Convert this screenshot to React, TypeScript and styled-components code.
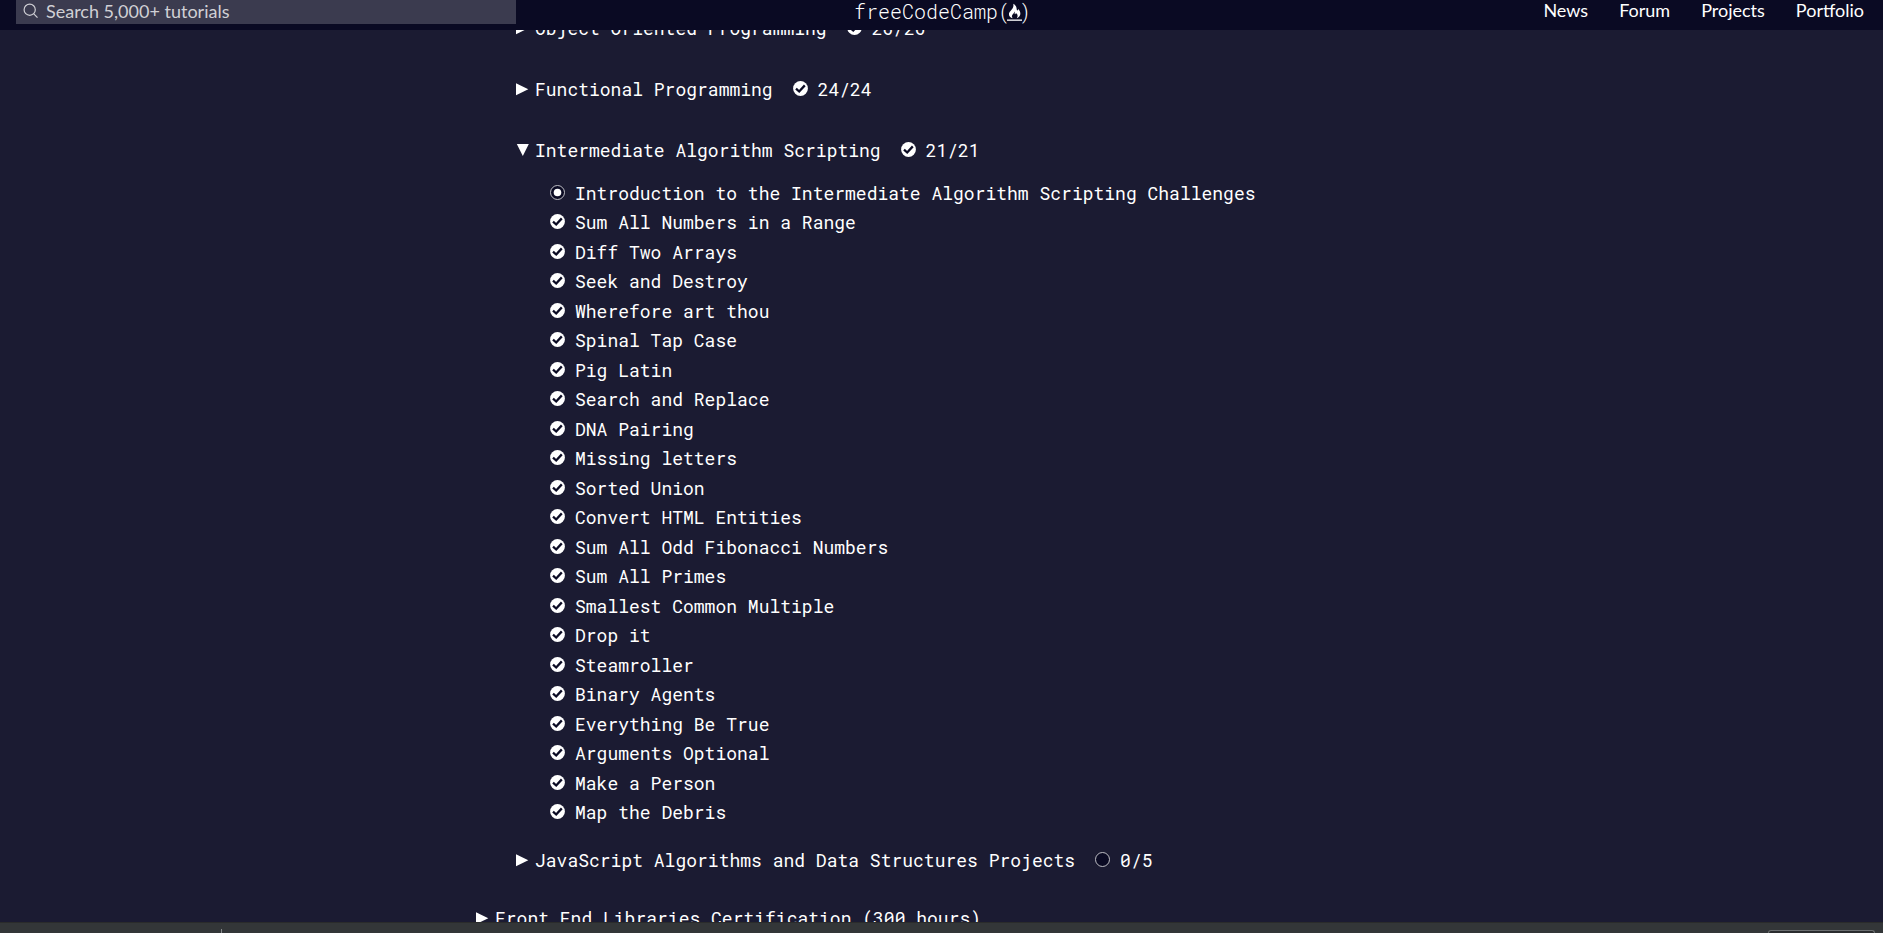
import React from 'react';
import styled, { createGlobalStyle } from 'styled-components';

const GlobalStyle = createGlobalStyle`
  *, *::before, *::after { box-sizing: border-box; }
  body {
    margin: 0;
    background: #1b1b32;
    color: #fff;
    font-family: Lato, sans-serif;
    font-size: 18px;
  }
`;

const mono = `'Roboto Mono', 'DejaVu Sans Mono', monospace`;

const Page = styled.div`
  display: flex;
  flex-direction: column;
  height: 100vh;
  overflow: hidden;
`;

const Header = styled.header`
  display: grid;
  grid-template-columns: 1fr auto 1fr;
  align-items: start;
  flex: none;
  height: 30px;
  padding: 0 16px;
  background: #0a0a23;
`;

const SearchForm = styled.form`
  display: flex;
  align-items: center;
  width: 500px;
  max-width: 100%;
  height: 24px;
  padding: 0 0 2px 7px;
  gap: 7px;
  background: #3b3b4f;
  color: #d0d0d5;
`;

const SearchInput = styled.input`
  flex: 1;
  min-width: 0;
  height: 22px;
  padding: 0;
  border: 0;
  outline: 0;
  background: transparent;
  color: inherit;
  font: inherit;
  line-height: 22px;
  &::placeholder { color: inherit; opacity: 1; }
`;

const Logo = styled.a`
  display: flex;
  align-items: center;
  height: 22px;
  padding-left: 2px;
  color: #fff;
  font-family: ${mono};
  font-size: 20px;
  font-weight: 300;
  line-height: 20px;
  text-decoration: none;
`;

const Flame = styled.svg`
  flex: none;
  margin: 1px -3px 0;
`;

const Nav = styled.nav`
  display: flex;
  justify-content: flex-end;
  gap: 31px;
  padding-right: 3px;
`;

const NavLink = styled.a`
  color: #fff;
  line-height: 20px;
  text-decoration: none;
`;

const Main = styled.main`
  flex: 1;
  min-height: 0;
  overflow: hidden;
  font-family: ${mono};
`;

const Curriculum = styled.div`
  display: flex;
  flex-direction: column;
  width: 931px;
  max-width: 100%;
  margin: -16px auto 0;
`;

const Blocks = styled.div`
  display: flex;
  flex-direction: column;
  padding-left: 40px;
`;

const BlockSection = styled.section<{ $open?: boolean }>`
  margin-bottom: ${({ $open }) => ($open ? 18 : 32)}px;
  &:last-child { margin-bottom: 29px; }
`;

const Toggle = styled.button`
  display: flex;
  align-items: center;
  height: 29px;
  padding: 0;
  border: 0;
  background: transparent;
  color: inherit;
  font: inherit;
  line-height: 29px;
  white-space: nowrap;
`;

const Arrow = styled.svg`
  flex: none;
  margin-right: 6px;
`;

const Progress = styled.span`
  display: flex;
  align-items: center;
  gap: 10px;
  margin-left: 20px;
`;

const StatusMark = styled.svg`
  flex: none;
  margin-bottom: 2px;
`;

const Lessons = styled.ul`
  margin: 14px 0 0;
  padding: 0 0 0 34px;
  list-style: none;
`;

const Lesson = styled.li`
  height: 29px;
  &:nth-child(even) { height: 30px; }
`;

const LessonLink = styled.a`
  display: flex;
  align-items: center;
  gap: 10px;
  color: inherit;
  line-height: 29px;
  text-decoration: none;
  white-space: nowrap;
`;

const Taskbar = styled.footer`
  display: flex;
  justify-content: space-between;
  align-items: flex-end;
  flex: none;
  height: 11px;
  padding: 0 8px 0 221px;
  border-top: 1px solid #2a2b2b;
  background: #333638;
`;

const Divider = styled.span`
  width: 1px;
  height: 4px;
  background: #85888a;
`;

const Tray = styled.span`
  width: 107px;
  height: 3px;
  border: 1px solid #6b6e70;
  border-bottom: 0;
  border-radius: 3px 3px 0 0;
  background: #2a2c2e;
`;

type Status = 'done' | 'intro' | 'empty';

const StatusIcon = ({ status }: { status: Status }) => (
  <StatusMark width="15" height="15" viewBox="0 0 15 15" aria-hidden="true">
    {status === 'done' ? (
      <>
        <circle cx="7.5" cy="7.5" r="7.4" fill="#fff" />
        <path d="M3 7.6 6.2 10.5 11.8 4.4" fill="none" stroke="#0a0a23" strokeWidth="2.3" />
      </>
    ) : (
      <>
        <circle cx="7.5" cy="7.5" r="7" fill="#0a0a23" stroke="#d0d0d5" strokeWidth="0.9" />
        {status === 'intro' && <circle cx="7.5" cy="7.5" r="3.8" fill="#fff" />}
      </>
    )}
  </StatusMark>
);

const ToggleArrow = ({ open }: { open?: boolean }) => (
  <Arrow width="13" height="13" viewBox="0 0 13 13" fill="#fff" aria-hidden="true">
    <path d={open ? 'M.8 0H12.8L6.8 12z' : 'M0 .2 12.3 6.2 0 12.200z'} />
  </Arrow>
);

interface BlockProps {
  title: string;
  progress?: string;
  status?: Status;
  open?: boolean;
  children?: React.ReactNode;
}

const Block = ({ title, progress, status = 'done', open, children }: BlockProps) => (
  <BlockSection $open={open}>
    <Toggle type="button" aria-expanded={!!open}>
      <ToggleArrow open={open} />
      {title}
      {progress && (
        <Progress>
          <StatusIcon status={status} />
          {progress}
        </Progress>
      )}
    </Toggle>
    {children}
  </BlockSection>
);

const lessons = [
  'Introduction to the Intermediate Algorithm Scripting Challenges',
  'Sum All Numbers in a Range',
  'Diff Two Arrays',
  'Seek and Destroy',
  'Wherefore art thou',
  'Spinal Tap Case',
  'Pig Latin',
  'Search and Replace',
  'DNA Pairing',
  'Missing letters',
  'Sorted Union',
  'Convert HTML Entities',
  'Sum All Odd Fibonacci Numbers',
  'Sum All Primes',
  'Smallest Common Multiple',
  'Drop it',
  'Steamroller',
  'Binary Agents',
  'Everything Be True',
  'Arguments Optional',
  'Make a Person',
  'Map the Debris',
];

export default function App() {
  return (
    <Page>
      <GlobalStyle />
      <Header>
        <SearchForm role="search">
          <svg width="16" height="16" viewBox="0 0 16 16" fill="none" stroke="currentColor" strokeWidth="1.2" aria-hidden="true">
            <circle cx="6.7" cy="6.7" r="5.6" />
            <path d="M10.8 10.8 14.5 14.6" />
          </svg>
          <SearchInput type="search" aria-label="Search" placeholder="Search 5,000+ tutorials" />
        </SearchForm>
        <Logo href="#">
          freeCodeCamp(
          <Flame width="15" height="18" viewBox="0 0 15 18" fill="#fff" aria-hidden="true">
            <path d="M6.3.8C10 3 9.400 5.400 10 7.200c.6.8 1.300-.2 1-1.500 2 2 2.900 4.300 2 6.500-.6 1.500-1.700 2.400-3.200 3 1.500-2.400.7-3.700-.8-5.100-.4 1.200-.9 1.300-1.200.9-.4-.6.200-1.500-.4-2.500-.3 2.500-2.700 3-2.500 5 .1.800.4 1.300.9 1.700C3.200 14.600 1.700 12.800 2 10.600 2.400 7.600 7.300 6 6.300.8z" />
            <rect x="0" y="16.500" width="15" height="1.300" />
          </Flame>
          )
        </Logo>
        <Nav>
          <NavLink href="#">News</NavLink>
          <NavLink href="#">Forum</NavLink>
          <NavLink href="#">Projects</NavLink>
          <NavLink href="#">Portfolio</NavLink>
        </Nav>
      </Header>
      <Main>
        <Curriculum>
          <Blocks>
            <Block title="Object Oriented Programming" progress="26/26" />
            <Block title="Functional Programming" progress="24/24" />
            <Block title="Intermediate Algorithm Scripting" progress="21/21" open>
              <Lessons>
                {lessons.map((name, i) => (
                  <Lesson key={name}>
                    <LessonLink href="#">
                      <StatusIcon status={i === 0 ? 'intro' : 'done'} />
                      {name}
                    </LessonLink>
                  </Lesson>
                ))}
              </Lessons>
            </Block>
            <Block title="JavaScript Algorithms and Data Structures Projects" progress="0/5" status="empty" />
          </Blocks>
          <Block title="Front End Libraries Certification (300 hours)" />
        </Curriculum>
      </Main>
      <Taskbar>
        <Divider />
        <Tray />
      </Taskbar>
    </Page>
  );
}
